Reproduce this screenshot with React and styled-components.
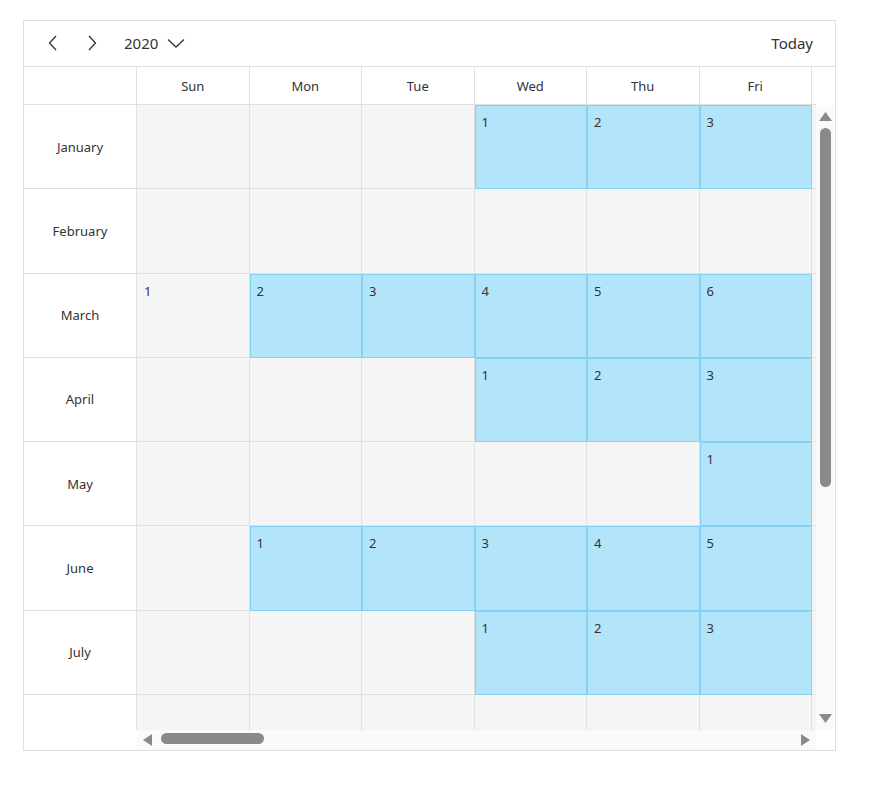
import React from "react";
import styled, {createGlobalStyle} from "styled-components";

const GlobalStyle = createGlobalStyle`
    body {
        margin: 0;
        background: #fff;
        font-family: "Noto Sans", "Open Sans", sans-serif;
        color: #333;
    }
`

const Page = styled.div`
    padding: 20px 0 0 23px;
`

const Scheduler = styled.div`
    width: 811px;
    height: 729px;
    border: 1px solid #e0e0e0;
    display: flex;
    flex-direction: column;
    background: #fff;
`

const Toolbar = styled.div`
    height: 46px;
    box-sizing: border-box;
    border-bottom: 1px solid #e0e0e0;
    display: flex;
    align-items: center;
    padding: 0 22px 1px 11px;
`

const IconButton = styled.button`
    width: 36px;
    height: 36px;
    border: none;
    background: none;
    display: flex;
    align-items: center;
    justify-content: center;
    padding: 0;
    margin-right: ${({gap}) => gap || 0}px;
    color: #333;
`

const DateRange = styled.div`
    display: flex;
    align-items: center;
    gap: 9px;
    font-size: 15px;
    margin-left: 14px;
`

const TodayButton = styled.div`
    margin-left: auto;
    font-size: 15px;
`

const Body = styled.div`
    flex: 1;
    display: grid;
    grid-template-columns: 113px 679px 19px;
    grid-template-rows: 38px 625px 20px;
`

const Corner = styled.div`
    border-right: 1px solid #e0e0e0;
    border-bottom: 1px solid #e0e0e0;
`

const HeaderRow = styled.div`
    display: flex;
    overflow: hidden;
    border-bottom: 1px solid #e0e0e0;
`

const HeaderCell = styled.div`
    flex: 0 0 112.5px;
    box-sizing: border-box;
    border-right: 1px solid #e0e0e0;
    display: flex;
    align-items: center;
    justify-content: center;
    font-size: 13px;
`

const MonthColumn = styled.div`
    overflow: hidden;
    border-right: 1px solid #e0e0e0;
`

const MonthCell = styled.div`
    height: 84.29px;
    box-sizing: border-box;
    border-bottom: 1px solid #e0e0e0;
    display: flex;
    align-items: center;
    justify-content: center;
    font-size: 13px;
`

const WorkArea = styled.div`
    overflow: hidden;
`

const WeekRow = styled.div`
    display: flex;
    height: 84.29px;
`

const DayCell = styled.div`
    flex: 0 0 112.5px;
    box-sizing: border-box;
    border-right: 1px solid ${({work}) => work ? '#86d0f1' : '#e0e0e0'};
    border-bottom: 1px solid ${({work}) => work ? '#86d0f1' : '#e0e0e0'};
    background: ${({work}) => work ? '#b3e5fa' : '#f5f5f5'};
    box-shadow: ${({work}) => work ? 'inset 1px 1px 0 #86d0f1' : 'none'};
    font-size: 13px;
    padding: 8px 0 0 7px;
`

const VScroll = styled.div`
    grid-row: 1 / 3;
    grid-column: 3;
    position: relative;
    background: #fff;
`

const VTrack = styled.div`
    position: absolute;
    top: 38px;
    left: 0;
    right: 0;
    bottom: 0;
    background: #fafafa;
`

const VThumb = styled.div`
    position: absolute;
    left: 4px;
    width: 11px;
    top: 23px;
    height: 359px;
    border-radius: 6px;
    background: #8a8a8a;
`

const HScroll = styled.div`
    position: relative;
    background: #fafafa;
`

const HThumb = styled.div`
    position: absolute;
    top: 3px;
    left: 24px;
    width: 103px;
    height: 11px;
    border-radius: 6px;
    background: #8a8a8a;
`

const Arrow = styled.svg`
    position: absolute;
`

const days = ["Sun", "Mon", "Tue", "Wed", "Thu", "Fri", "Sat"]
const months = ["January", "February", "March", "April", "May", "June", "July", "August"]

const Chevron = ({d}) => (
    <svg width="14" height="16" viewBox="0 0 14 16" fill="none" stroke="#333" strokeWidth="1.3">
        <path d={d}/>
    </svg>
)

export default function App() {
    return (
        <Page>
            <GlobalStyle/>
            <Scheduler>
                <Toolbar>
                    <IconButton gap={3}><Chevron d="M10 1 L3.5 8 L10 15"/></IconButton>
                    <IconButton><Chevron d="M4 1 L10.5 8 L4 15"/></IconButton>
                    <DateRange>
                        2020
                        <svg width="18" height="10" viewBox="0 0 18 10" fill="none" stroke="#333" strokeWidth="1.3">
                            <path d="M1 1.5 L9 9 L17 1.5"/>
                        </svg>
                    </DateRange>
                    <TodayButton>Today</TodayButton>
                </Toolbar>
                <Body>
                    <Corner/>
                    <HeaderRow>
                        {days.map(d => <HeaderCell key={d}>{d}</HeaderCell>)}
                    </HeaderRow>
                    <VScroll>
                        <VTrack>
                            <Arrow width="13" height="9" viewBox="0 0 13 9" style={{top: 7, left: 3}}>
                                <path d="M6.5 0 L13 9 L0 9 Z" fill="#8a8a8a"/>
                            </Arrow>
                            <VThumb/>
                            <Arrow width="13" height="9" viewBox="0 0 13 9" style={{bottom: 7, left: 3}}>
                                <path d="M0 0 L13 0 L6.5 9 Z" fill="#8a8a8a"/>
                            </Arrow>
                        </VTrack>
                    </VScroll>
                    <MonthColumn>
                        {months.map(m => <MonthCell key={m}>{m}</MonthCell>)}
                    </MonthColumn>
                    <WorkArea>
                        {months.map((m, i) => {
                            const first = new Date(2020, i, 1).getDay()
                            return (
                                <WeekRow key={m}>
                                    {days.map((d, col) => {
                                        const date = col >= first ? col - first + 1 : null
                                        const work = date && col > 0 && col < 6
                                        return <DayCell key={d} work={work}>{date}</DayCell>
                                    })}
                                </WeekRow>
                            )
                        })}
                    </WorkArea>
                    <div/>
                    <HScroll>
                        <Arrow width="9" height="12" viewBox="0 0 9 12" style={{top: 4, left: 6}}>
                            <path d="M0 6 L9 0 L9 12 Z" fill="#8a8a8a"/>
                        </Arrow>
                        <HThumb/>
                        <Arrow width="9" height="12" viewBox="0 0 9 12" style={{top: 4, right: 6}}>
                            <path d="M0 0 L9 6 L0 12 Z" fill="#8a8a8a"/>
                        </Arrow>
                    </HScroll>
                    <div/>
                </Body>
            </Scheduler>
        </Page>
    )
}
